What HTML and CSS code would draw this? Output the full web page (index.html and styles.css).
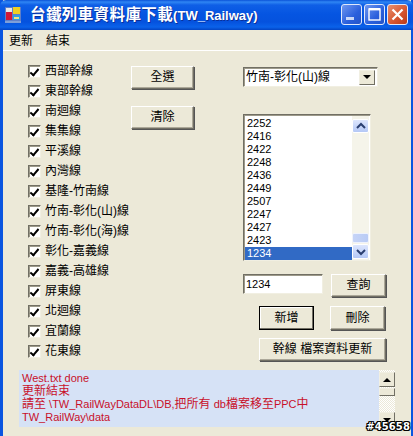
FILE: index.html
```html
<!DOCTYPE html>
<html lang="zh-Hant">
<head>
<meta charset="utf-8">
<title>台鐵列車資料庫下載(TW_Railway)</title>
<link rel="stylesheet" href="styles.css">
</head>
<body>
<div class="window">
  <header class="titlebar">
    <svg class="app-icon" width="16" height="16" viewBox="0 0 16 16">
      <rect x="0" y="0" width="16" height="16" fill="#5f7fc8"/>
      <rect x="1" y="1" width="6" height="6" fill="#e8e8e8"/>
      <rect x="8" y="0" width="7" height="7" fill="#f0d020"/>
      <rect x="1" y="5" width="6" height="8" fill="#d01838"/>
      <rect x="8" y="8" width="7" height="5" fill="#30a0e0"/>
      <rect x="9" y="10" width="5" height="2" fill="#f0e880"/>
      <rect x="0" y="14" width="16" height="2" fill="#7f9fd8"/>
    </svg>
    <div class="title"><span class="title-cjk">台鐵列車資料庫下載</span>(TW_Railway)</div>
    <div class="win-buttons">
      <div class="win-btn"><svg width="21" height="21" viewBox="0 0 21 21"><rect x="5" y="13" width="8" height="3" fill="#fff" opacity=".75"/></svg></div>
      <div class="win-btn"><svg width="21" height="21" viewBox="0 0 21 21"><rect x="5" y="5" width="11" height="11" fill="none" stroke="#fff" stroke-width="1.4"/><rect x="5" y="4" width="11" height="2.4" fill="#fff"/></svg></div>
      <div class="win-btn close"><svg width="21" height="21" viewBox="0 0 21 21"><path d="M5.5 5.5l10 10M15.5 5.5l-10 10" stroke="#fff" stroke-width="2.2"/></svg></div>
    </div>
  </header>
  <nav class="menubar"><span>更新</span><span>結束</span></nav>
  <main class="client">
    <div class="top">
      <ul class="checks">
        <li><span class="cb"></span>西部幹線</li>
        <li><span class="cb"></span>東部幹線</li>
        <li><span class="cb"></span>南迴線</li>
        <li><span class="cb"></span>集集線</li>
        <li><span class="cb"></span>平溪線</li>
        <li><span class="cb"></span>內灣線</li>
        <li><span class="cb"></span>基隆-竹南線</li>
        <li><span class="cb"></span>竹南-彰化(山)線</li>
        <li><span class="cb"></span>竹南-彰化(海)線</li>
        <li><span class="cb"></span>彰化-嘉義線</li>
        <li><span class="cb"></span>嘉義-高雄線</li>
        <li><span class="cb"></span>屏東線</li>
        <li><span class="cb"></span>北迴線</li>
        <li><span class="cb"></span>宜蘭線</li>
        <li><span class="cb"></span>花東線</li>
      </ul>
      <div class="mid">
        <button class="btn sel">全選</button>
        <button class="btn sel">清除</button>
      </div>
      <div class="right">
        <div class="combo"><span class="combo-text">竹南-彰化(山)線</span><span class="combo-arrow"></span></div>
        <div class="list">
          <div class="items">
            <div>2252</div><div>2416</div><div>2422</div><div>2248</div><div>2436</div><div>2449</div><div>2507</div><div>2247</div><div>2427</div><div>2423</div><div class="active">1234</div>
          </div>
          <div class="xp-scroll">
            <div class="xp-btn first"><svg width="10" height="8" viewBox="0 0 10 8"><path d="M1 6l4-4 4 4" fill="none" stroke="#2a3f70" stroke-width="2"/></svg></div>
            <div class="xp-track"></div>
            <div class="xp-thumb"></div>
            <div class="xp-btn"><svg width="10" height="8" viewBox="0 0 10 8"><path d="M1 2l4 4 4-4" fill="none" stroke="#2a3f70" stroke-width="2"/></svg></div>
          </div>
        </div>
        <div class="row search"><div class="input">1234</div><button class="btn small">查詢</button></div>
        <div class="row add"><button class="btn small default">新增</button><button class="btn small">刪除</button></div>
        <button class="btn wide">幹線 檔案資料更新</button>
      </div>
    </div>
    <div class="logwrap">
      <div class="log">West.txt done<br><span class="cjk">更新結束</span><br><span class="cjk">請至</span> \TW_RailWayDataDL\DB,<span class="cjk">把所有</span> db<span class="cjk">檔案移至</span>PPC<span class="cjk">中</span><br>TW_RailWay\data</div>
      <div class="classic-scroll">
        <div class="cl-btn"><span class="up"></span></div>
        <div class="cl-thumb"></div>
        <div class="cl-track"></div>
        <div class="cl-btn"><span class="down"></span></div>
      </div>
    </div>
  </main>
</div>
<div class="stamp">#45658</div>
</body>
</html>
```
FILE: styles.css
```css
* { box-sizing: border-box; }
html, body { margin: 0; padding: 0; }
body {
  width: 413px; height: 436px; overflow: hidden; position: relative;
  background: #ece9d8;
  font: 12px/13px "Liberation Sans", "Noto Sans CJK TC", sans-serif;
  color: #000;
}
.window {
  width: 413px; height: 436px; display: flex; flex-direction: column;
  background: linear-gradient(90deg, #0a55e0 0, #0a55e0 3px, transparent 3px, transparent 411px, #0a55e0 411px);
}
.titlebar {
  height: 30px; flex: none; display: flex; align-items: center; padding: 0 5px 0 5px;
  background: linear-gradient(#0a53d8 0, #2f86f4 2px, #0f5fe6 5px, #0555e2 14px, #0552de 22px, #0a62ea 27px, #0344c4 30px);
  border-radius: 6px 6px 0 0;
}
.app-icon { flex: none; margin: 0 9px 0 0; }
.title { color: #fff; font-weight: bold; font-size: 13px; flex: 1; text-shadow: 1px 1px 0 #0a2f9a; white-space: nowrap; }
.title-cjk { font-size: 15.5px; letter-spacing: .4px; }
.win-buttons { display: flex; gap: 2px; margin-top: -1px; }
.win-btn {
  width: 21px; height: 21px; border: 1px solid #dfe8fb; border-radius: 3px;
  background: linear-gradient(135deg, #6f97f0, #2a5fdc 60%, #2454c8);
}
.win-btn svg { display: block; margin: -1px; }
.win-btn.close { background: linear-gradient(135deg, #e8906e, #d5532e 60%, #b83a18); }
.menubar {
  height: 21px; flex: none; margin: 0 2px 0 3px; display: flex; gap: 13px; padding: 4px 5px 0 6px;
  font-size: 12px; border-bottom: 1px solid #fff; line-height: 15px;
}
.client { flex: 1; margin: 0 2px 0 3px; display: flex; flex-direction: column; min-height: 0; }
.top { display: flex; height: 319px; flex: none; padding-top: 10px; }
.checks { list-style: none; margin: 0; padding: 0 0 0 25px; width: 128px; flex: none; }
.checks li { height: 20px; display: flex; align-items: center; white-space: nowrap; gap: 4px; }
.cb {
  width: 13px; height: 13px; flex: none; background: #fff; position: relative;
  border: 1px solid; border-color: #716f64 #f1efe2 #f1efe2 #716f64; box-shadow: inset 1px 1px 0 #9d9a8a;
}
.cb::after {
  content: ""; position: absolute; left: 3px; top: 1px; width: 3px; height: 7px;
  border: solid #000; border-width: 0 2px 2px 0; transform: rotate(40deg);
}
.mid { width: 112px; flex: none; display: flex; flex-direction: column; gap: 17px; padding-top: 5px; }
.btn {
  font: inherit; color: #000; background: #ece9d8; padding: 0; display: block;
  border: 1px solid; border-color: #fff #716f64 #716f64 #fff;
  box-shadow: inset -1px -1px 0 #aca899, 1px 1px 0 #555;
  border-radius: 0;
}
.btn.sel { width: 63px; height: 23px; }
.right { width: 143px; flex: none; display: flex; flex-direction: column; padding-top: 6px; }
.combo {
  width: 135px; height: 20px; background: #fff; display: flex; align-items: center;
  border: 1px solid; border-color: #716f64 #f1efe2 #f1efe2 #716f64; box-shadow: inset 1px 1px 0 #9d9a8a;
  padding: 2px; margin-bottom: 27px; flex: none;
}
.combo-text { flex: 1; white-space: nowrap; }
.combo-arrow {
  width: 16px; height: 15px; flex: none; position: relative; background: #ece9d8;
  border: 1px solid; border-color: #f1efe2 #716f64 #716f64 #f1efe2;
}
.combo-arrow::after {
  content: ""; position: absolute; left: 3px; top: 4px;
  border: 4px solid transparent; border-top: 4px solid #000; border-bottom: 0;
}
.list {
  width: 128px; height: 147px; background: #fff; display: flex; flex: none; margin-bottom: 14px;
  border: 1px solid; border-color: #716f64 #f1efe2 #f1efe2 #716f64; box-shadow: inset 1px 1px 0 #9d9a8a;
  padding: 1px 0 0 1px;
}
.items { flex: 1; font-size: 11px; line-height: 13px; padding-top: 1px; }
.items div { height: 13px; padding-left: 2px; }
.items .active { background: #316ac5; color: #fff; }
.xp-scroll { width: 17px; flex: none; margin-right: 1px; padding: 3px 0 1px; display: flex; flex-direction: column; background: #f5f4ea; }
.xp-btn {
  height: 15px; flex: none; display: flex; align-items: center; justify-content: center; border-radius: 2px;
  background: linear-gradient(#dde6fd, #b4c8f6); border: 1px solid #fff;
}
.xp-btn.first { height: 14px; }
.xp-track { flex: 1; }
.xp-thumb { height: 10px; flex: none; border-radius: 2px; background: linear-gradient(90deg, #c6d4f7, #b9cbf5); border: 1px solid #eef2fd; margin-bottom: 1px; }
.row { display: flex; flex: none; }
.input {
  width: 80px; height: 20px; background: #fff; margin-right: 8px; padding: 3px 0 0 2px; font-size: 11px;
  border: 1px solid; border-color: #716f64 #f1efe2 #f1efe2 #716f64; box-shadow: inset 1px 1px 0 #9d9a8a;
}
.btn.small { width: 55px; height: 23px; }
.search { margin-bottom: 9px; margin-top: -1px; align-items: flex-start; }
.add { margin-left: 16px; gap: 16px; margin-bottom: 8px; }
.add .btn.small { height: 24px; }
.btn.default { border: 1px solid #000; box-shadow: inset -1px -1px 0 #716f64, inset 1px 1px 0 #fff; }
.btn.wide { width: 127px; height: 23px; margin-left: 16px; flex: none; }
.logwrap { display: flex; margin: 0 0 0 16px; height: 57px; flex: none; }
.log {
  width: 360px; background: #d6e2f6; color: #c8102a; padding: 2px 0 0 3px; line-height: 13px; font-size: 11px; white-space: nowrap;
}
.cjk { font-size: 12px; }
.classic-scroll { width: 16px; flex: none; padding-top: 2px; display: flex; flex-direction: column; background: repeating-conic-gradient(#ece9d8 0 25%, #fff 0 50%) 0 0 / 2px 2px; }
.cl-btn, .cl-thumb {
  background: #ece9d8; border: 1px solid; border-color: #f1efe2 #716f64 #716f64 #f1efe2; flex: none;
}
.cl-btn { height: 15px; position: relative; }
.cl-thumb { height: 8px; margin-top: 1px; }
.cl-track { flex: 1; }
.cl-btn span { position: absolute; left: 3px; top: 5px; border: 4px solid transparent; }
.cl-btn .up { border-top: 0; border-bottom-color: #000; }
.cl-btn .down { border-bottom: 0; border-top-color: #000; }
.stamp {
  position: absolute; right: 3px; top: 420px; font: bold 10px/13px "DejaVu Sans", sans-serif; letter-spacing: .1px; color: #fff;
  text-shadow: 1px 0 0 #000, -1px 0 0 #000, 0 1px 0 #000, 0 -1px 0 #000, 1px 1px 0 #000, -1px -1px 0 #000, 1px -1px 0 #000, -1px 1px 0 #000;
}
```
